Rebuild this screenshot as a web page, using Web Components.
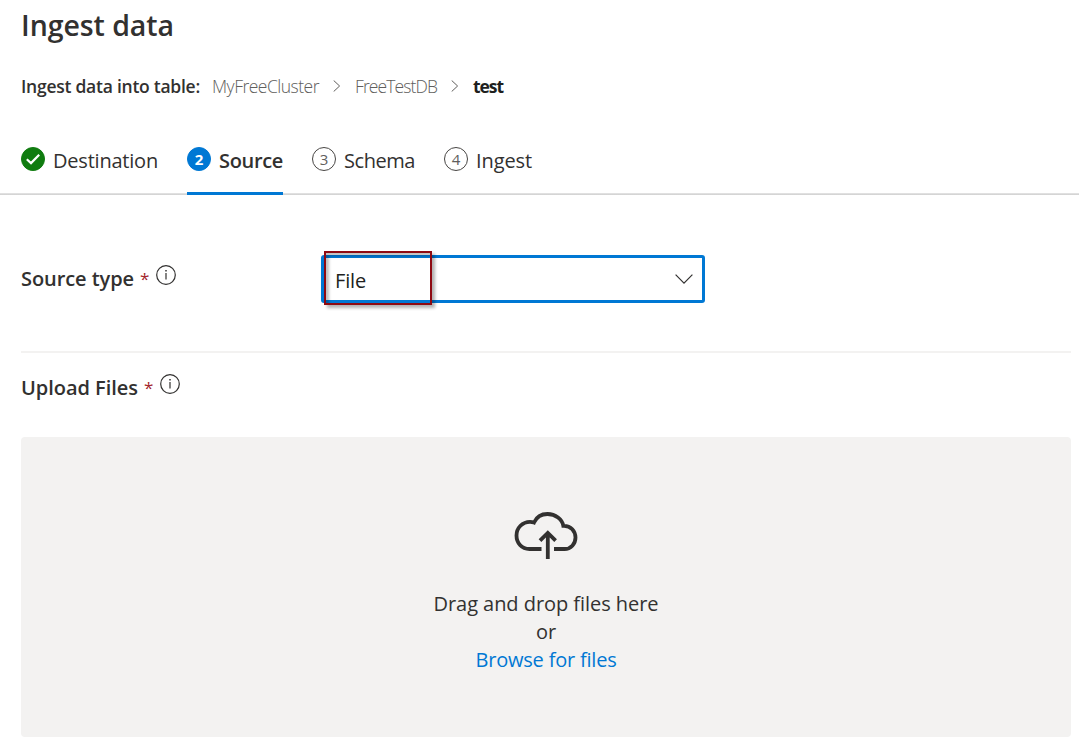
<!DOCTYPE html>
<html lang="en">
<head>
<meta charset="utf-8">
<title>Ingest data</title>
<style>
body{margin:0;background:#fff;color:#323130;font-family:"Open Sans","Noto Sans",sans-serif;overflow:hidden}
</style>
</head>
<body>
<ingest-page></ingest-page>
<script>
const define=(name,html,setup)=>customElements.define(name,class extends HTMLElement{
  connectedCallback(){
    if(this.shadowRoot)return;
    this.attachShadow({mode:'open'}).innerHTML=html;
    if(setup)setup(this,this.shadowRoot);
  }
});

// One line of text, tracked so that it fills the width given in "w".
define('fit-text',`<style>:host{display:block;flex:none;white-space:pre}span{display:inline-block}</style><span><slot></slot></span>`,(el,root)=>{
  const span=root.querySelector('span'),w=+el.getAttribute('w');
  el.style.width=w+'px';
  const n=el.textContent.length;
  span.style.letterSpacing=((w-span.getBoundingClientRect().width)/n)+'px';
});

define('info-icon',`<style>:host{display:block;width:20px;height:20px;flex:none}svg{display:block}</style>
<svg width="20" height="20" viewBox="0 0 20 20" fill="none" stroke="#323130"><circle cx="10" cy="10" r="9.3" stroke-width="1.2"/><path d="M10 8v6.5" stroke-width="1.2"/><path d="M10 5v1.5" stroke-width="1.5"/></svg>`);

define('crumb-chevron',`<style>:host{display:block;width:8px;height:12px;flex:none}svg{display:block}</style>
<svg width="8" height="12" viewBox="0 0 8 12" fill="none" stroke="#605e5c" stroke-width="1"><path d="M.7.5 6.6 6 .7 11.5"/></svg>`);

define('bread-crumb',`<style>:host{display:flex;align-items:center;height:24px;line-height:24px;font-size:17.5px}
.l{font-weight:600}.t{font-weight:300;color:#605e5c}.c{font-weight:700;color:#201f1e}
.a{margin-left:12px}.b{margin-left:14px}.d{margin-left:14px}</style>
<fit-text class="l" w="179">Ingest data into table:</fit-text>
<fit-text class="t a" w="107">MyFreeCluster</fit-text><crumb-chevron class="b"></crumb-chevron>
<fit-text class="t d" w="82">FreeTestDB</fit-text><crumb-chevron class="b"></crumb-chevron>
<fit-text class="c b" w="30">test</fit-text>`);

define('wizard-step',`<style>
:host{display:flex;box-sizing:border-box;height:49px;gap:8px;font-size:20px;line-height:30px;flex:none}
:host([state=active]){border-bottom:3px solid #0078d4;font-weight:600}
.dot{box-sizing:border-box;width:24px;height:24px;border-radius:50%;margin-top:1px;border:1px solid #484644;font-size:15px;line-height:22px;text-align:center;color:#605e5c;flex:none}
:host([state=active]) .dot{background:#0078d4;border-color:#0078d4;color:#fff;font-weight:700}
:host([state=done]) .dot{background:#107c10;border-color:#107c10}
svg{display:block}
</style><div class="dot"></div><slot></slot>`,(el,root)=>{
  const dot=root.querySelector('.dot');
  if(el.getAttribute('state')==='done')dot.innerHTML='<svg width="22" height="22" viewBox="0 0 22 22" fill="none" stroke="#fff" stroke-width="2.2"><path d="M4.8 11.2 9 15.1 17.2 6.7"/></svg>';
  else dot.textContent=el.getAttribute('n');
});

define('wizard-steps',`<style>:host{display:flex;gap:29px;height:49px;padding-left:21px;background:linear-gradient(#e6e6e6,#cfcfcf) 0 47px/100% 2px no-repeat}
</style>
<wizard-step state="done"><fit-text w="105">Destination</fit-text></wizard-step>
<wizard-step state="active" n="2"><fit-text w="64">Source</fit-text></wizard-step>
<wizard-step n="3"><fit-text w="71">Schema</fit-text></wizard-step>
<wizard-step n="4"><fit-text w="56">Ingest</fit-text></wizard-step>`);

define('field-label',`<style>:host{display:flex;height:28px;line-height:28px;font-size:20px;font-weight:600;flex:none}
b{font-weight:400;color:#a4262c;font-size:17px;margin-left:6px;width:10px}info-icon{margin:0 0 0 6px}</style>
<slot></slot><b>*</b><info-icon></info-icon>`);

define('source-select',`<style>
:host{position:relative;display:flex;align-items:center;justify-content:space-between;box-sizing:border-box;width:384px;height:48px;border:3px solid #0078d4;border-radius:3px;padding:3px 9px 0 11px;font-size:20px;line-height:28px;color:#201f1e}
svg{display:block;margin-top:-3px}
.mark{position:absolute;left:0;top:-7px;width:104px;height:50px;border:2px solid #8e0a12;box-shadow:3px 3px 3px rgba(0,0,0,.3),inset 3px 3px 3px rgba(0,0,0,.25)}
</style><fit-text w="31">File</fit-text>
<svg width="18" height="10" viewBox="0 0 18 10" fill="none" stroke="#323130" stroke-width="1.2"><path d="M.6.7 9 9.1 17.4.7"/></svg><div class="mark"></div>`);

define('drop-zone',`<style>
:host{display:flex;flex-direction:column;align-items:center;box-sizing:border-box;height:300px;padding-top:74px;background:#f3f2f1;border-radius:4px;font-size:20px;line-height:28px}
svg{display:block;margin-bottom:30px}.link{color:#0078d4}
</style>
<svg width="64" height="49" viewBox="0 0 64 49" fill="none" stroke="#323130" stroke-width="3.8"><path d="M27.5 38H15.5C7.5 38 2.5 31.8 2.5 24.5 2.5 16.8 8.5 10.8 16 10.8Q18 10.8 20 11.6C22.5 6 27.5 3 33.5 3 41.5 3 48.3 8.2 49.3 14.8 57 14.4 61.5 20.5 61.5 26.6 61.5 33 56.8 38 50.5 38H40"/><path d="M33.8 48V22M26 29.7 33.8 21.9 41.6 29.7"/></svg>
<fit-text w="225">Drag and drop files here</fit-text>
<fit-text w="20">or</fit-text>
<fit-text class="link" w="141">Browse for files</fit-text>`);

define('ingest-page',`<style>
:host{display:block;width:1079px;height:743px;padding-top:5px;box-sizing:border-box}
.title{font-size:28.5px;line-height:40px;font-weight:600;margin-left:21px}
bread-crumb{margin:29px 0 0 21px}
wizard-steps{margin-top:48px}
main{padding:0 8px 0 21px}
.row{display:flex;margin-top:60px}
.row field-label{width:300px;margin-top:10px}
hr{border:0;height:2px;background:#f3f2f1;margin:48px 0 21px}
drop-zone{margin-top:35px}
</style>
<fit-text class="title" w="153">Ingest data</fit-text>
<bread-crumb></bread-crumb>
<wizard-steps></wizard-steps>
<main>
<div class="row"><field-label><fit-text w="113">Source type</fit-text></field-label><source-select></source-select></div>
<hr>
<field-label><fit-text w="117">Upload Files</fit-text></field-label>
<drop-zone></drop-zone>
</main>`);
</script>
</body>
</html>
